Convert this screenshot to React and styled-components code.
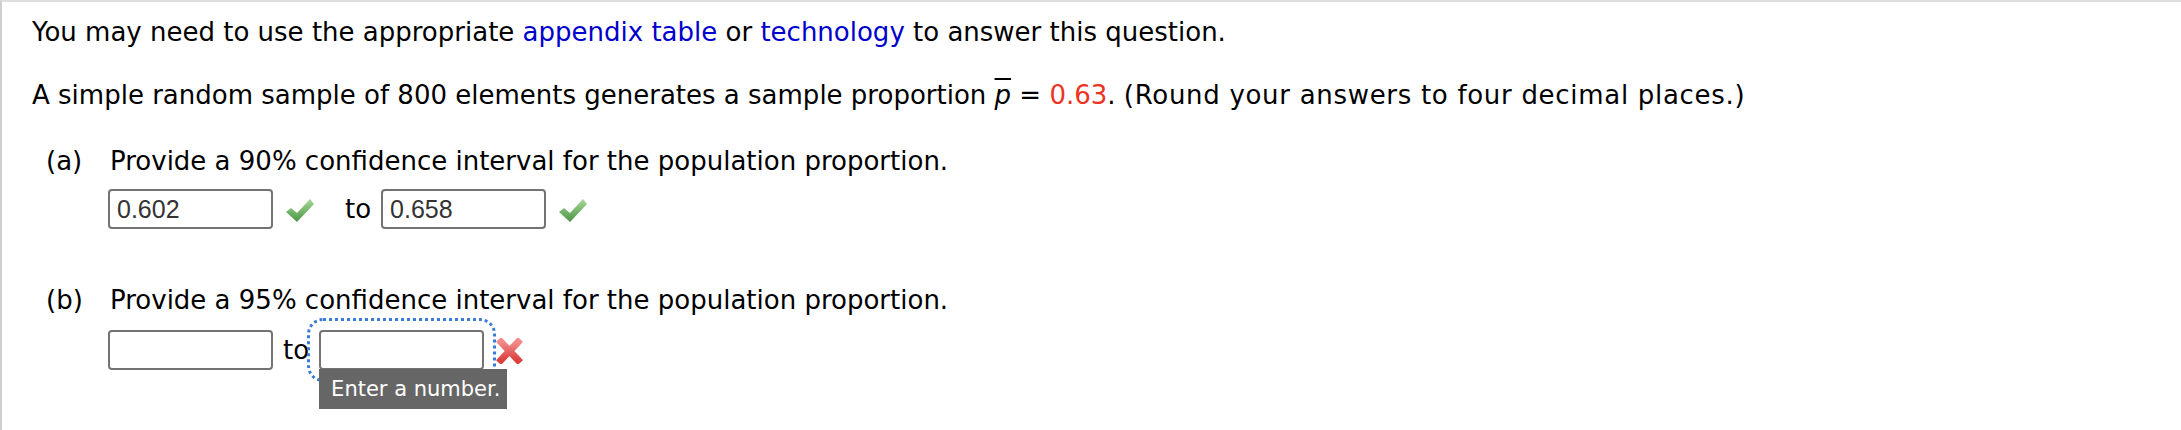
import styled, { createGlobalStyle } from "styled-components";

const GlobalStyle = createGlobalStyle`
    body {
        margin: 0;
        background: #fff;
        font-family: "DejaVu Sans", Verdana, sans-serif;
        color: #000;
    }
`;

const Page = styled.div`
    min-height: 428px;
    border-top: 2px solid #dedede;
    border-left: 2px solid #cfcfcf;
    padding: 15px 0 0 30px;
`;

const Paragraph = styled.p`
    margin: ${(p) => p.$top || 0}px 0 0;
    font-size: 26px;
    line-height: 30px;
    white-space: nowrap;
`;

const Link = styled.a`
    color: #0000cc;
    text-decoration: none;
`;

const Value = styled.span`
    color: #ec3324;
`;

const Instruction = styled.span`
    letter-spacing: 0.7px;
`;

const PBar = styled.i`
    text-decoration: overline;
    text-decoration-thickness: 2px;
`;

const Part = styled.section`
    display: grid;
    grid-template-columns: 64px 1fr;
    margin: ${(p) => p.$top}px 0 0 14px;
`;

const PartLabel = styled.span`
    font-size: 26px;
    line-height: 30px;
    white-space: nowrap;
`;

const AnswerRow = styled.div`
    grid-column: 2;
    display: flex;
    align-items: center;
    height: 40px;
    margin: ${(p) => p.$top || 13}px 0 0 -2px;
`;

const Field = styled.span`
    position: relative;
    display: inline-flex;
`;

const Input = styled.input`
    box-sizing: border-box;
    width: 165px;
    height: 40px;
    border: 2px solid #737373;
    border-radius: 4px;
    padding: 0 7px;
    font-family: "Liberation Sans", Arial, sans-serif;
    font-size: 25px;
    color: #333;
    background: #fff;
    outline: ${(p) => (p.$focused ? "3px dotted #3a7bd8" : "none")};
    outline-offset: 9px;
`;

const Status = styled.span`
    display: inline-flex;
    margin: 2px 20px 0 12px;
`;

const Between = styled.span`
    font-size: 26px;
    margin: 0 10px;
`;

const Tooltip = styled.div`
    position: absolute;
    left: 0;
    top: 39px;
    width: 188px;
    height: 40px;
    box-sizing: border-box;
    padding-left: 12px;
    background: #666;
    color: #fff;
    font-size: 21px;
    line-height: 40px;
    white-space: nowrap;
    z-index: 2;
`;

const Check = () => (
    <svg width="30" height="27" viewBox="0 0 30 27">
        <defs>
            <linearGradient id="ck" x1="0" y1="0" x2="0" y2="1">
                <stop offset="0" stopColor="#a7d998" />
                <stop offset="1" stopColor="#4b9543" />
            </linearGradient>
        </defs>
        <path d="M1 15 L6 11 L12 16 L25 2 L29 7 L12 25 Z" fill="url(#ck)" />
    </svg>
);

const Cross = () => (
    <svg width="27" height="26" viewBox="0 0 27 26">
        <defs>
            <linearGradient id="cx" x1="0" y1="0" x2="0" y2="1">
                <stop offset="0" stopColor="#f28a8a" />
                <stop offset="1" stopColor="#d9423f" />
            </linearGradient>
        </defs>
        <path
            d="M5 4 L22 22 M22 4 L5 22"
            stroke="url(#cx)"
            strokeWidth="7"
            strokeLinecap="square"
        />
    </svg>
);

const App = () => {
    return (
        <Page>
            <GlobalStyle />
            <Paragraph>
                You may need to use the appropriate <Link>appendix table</Link> or{" "}
                <Link>technology</Link> to answer this question.
            </Paragraph>
            <Paragraph $top={33}>
                A simple random sample of 800 elements generates a sample proportion{" "}
                <PBar>p</PBar> = <Value>0.63</Value>.{" "}
                <Instruction>(Round your answers to four decimal places.)</Instruction>
            </Paragraph>

            <Part $top={36}>
                <PartLabel>(a)</PartLabel>
                <PartLabel>Provide a 90% confidence interval for the population proportion.</PartLabel>
                <AnswerRow>
                    <Field>
                        <Input defaultValue="0.602" readOnly />
                    </Field>
                    <Status>
                        <Check />
                    </Status>
                    <Between>to</Between>
                    <Field>
                        <Input defaultValue="0.658" readOnly />
                    </Field>
                    <Status>
                        <Check />
                    </Status>
                </AnswerRow>
            </Part>

            <Part $top={56}>
                <PartLabel>(b)</PartLabel>
                <PartLabel>Provide a 95% confidence interval for the population proportion.</PartLabel>
                <AnswerRow $top={15}>
                    <Field>
                        <Input defaultValue="" readOnly />
                    </Field>
                    <Between>to</Between>
                    <Field>
                        <Input defaultValue="" readOnly $focused />
                        <Tooltip>Enter a number.</Tooltip>
                    </Field>
                    <Status>
                        <Cross />
                    </Status>
                </AnswerRow>
            </Part>
        </Page>
    );
};

export default App;
